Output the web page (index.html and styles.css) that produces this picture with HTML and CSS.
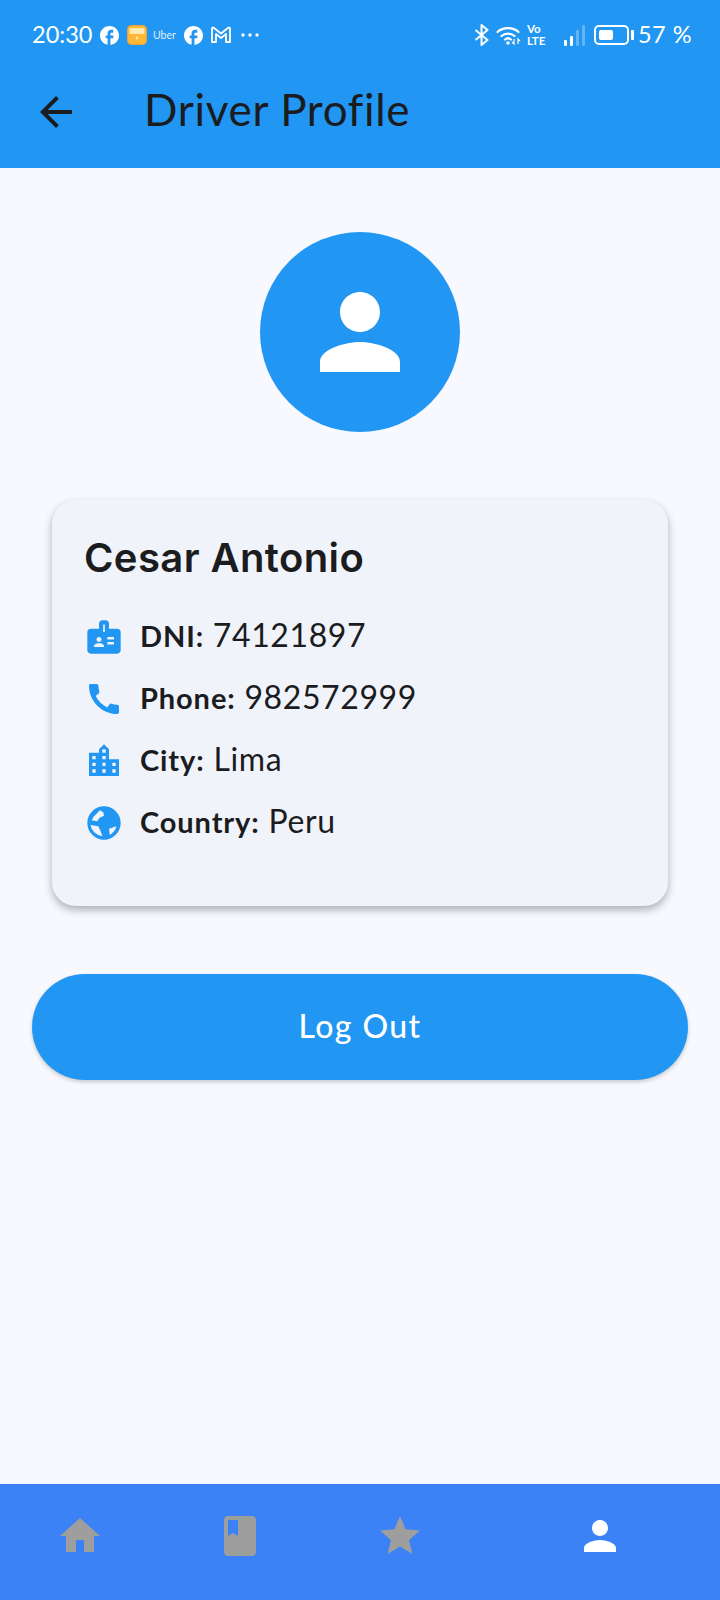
FILE: index.html
```html
<!DOCTYPE html>
<html lang="en">
<head>
  <meta charset="UTF-8">
  <title>Driver Profile</title>
  <link rel="stylesheet" href="styles.css">
</head>
<body>
  <div class="phone">
    <header class="appbar">
      <div class="status">
        <div class="status-left">
          <span class="clock">20:30</span>
          <svg class="ic-fb" viewBox="2 2 20 20"><path d="M22 12c0-5.52-4.48-10-10-10S2 6.48 2 12c0 4.84 3.44 8.87 8 9.8V15H8v-3h2V9.5C10 7.57 11.57 6 13.5 6H16v3h-2c-.55 0-1 .45-1 1v2h3v3h-3v6.95c5.05-.5 9-4.76 9-9.95z"/></svg>
          <svg class="ic-wallet" viewBox="0 0 20 20">
            <rect x=".5" y=".5" width="19" height="19" rx="4" fill="#fdb733" stroke="#eda33a"/>
            <rect x="2.5" y="3" width="15" height="6" rx="1" fill="#ffe9b0"/>
            <circle cx="10" cy="13" r="1.4" fill="#ffe9b0"/>
          </svg>
          <span class="uber">Uber</span>
          <svg class="ic-fb" viewBox="2 2 20 20"><path d="M22 12c0-5.52-4.48-10-10-10S2 6.48 2 12c0 4.84 3.44 8.87 8 9.8V15H8v-3h2V9.5C10 7.57 11.57 6 13.5 6H16v3h-2c-.55 0-1 .45-1 1v2h3v3h-3v6.95c5.05-.5 9-4.76 9-9.95z"/></svg>
          <svg class="ic-mail" viewBox="0 0 20 18"><path d="M1 16V2.5c0-1 1-1.300 1.700-.8L10 7.500l7.300-5.800c.7-.5 1.700-.2 1.700.8V16h-4V8l-5 4-5-4v8z" fill="none" stroke="#fff" stroke-width="1.800" stroke-linejoin="round"/></svg>
          <svg class="ic-dots" viewBox="0 0 18 4"><circle cx="2" cy="2" r="1.700"/><circle cx="9" cy="2" r="1.700"/><circle cx="16" cy="2" r="1.700"/></svg>
        </div>
        <div class="status-right">
          <svg class="ic-bt" viewBox="0 0 15 22"><path d="M1.500 6l12 10-6 5V1l6 5-12 10" fill="none" stroke="#fff" stroke-width="2" stroke-linejoin="round"/></svg>
          <svg class="ic-wifi" viewBox="0 0 26 20">
            <g fill="none" stroke="#fff" stroke-width="2.200" stroke-linecap="round">
              <path d="M1.500 7C7 1.800 17 1.800 22.500 7"/>
              <path d="M5.500 11c3.500-3.200 9.500-3.200 13 0"/>
              <path d="M9 14.500c1.800-1.500 4.200-1.500 6 0"/>
            </g>
            <circle cx="12" cy="18" r="1.800" fill="#fff"/>
            <path d="M18 14v5l-2-2M22 19v-5l2 2" fill="none" stroke="#fff" stroke-width="1.200"/>
          </svg>
          <span class="volte">Vo<br>LTE</span>
          <svg class="ic-signal" viewBox="0 0 22 21">
            <rect x="0" y="15" width="3" height="6" rx="1" fill="#fff"/>
            <rect x="6" y="11" width="3" height="10" rx="1" fill="#fff"/>
            <rect x="12" y="5" width="3" height="16" rx="1" fill="#fff" opacity=".3"/>
            <rect x="18" y="0" width="3" height="21" rx="1" fill="#fff" opacity=".3"/>
          </svg>
          <div class="battery"><div class="battery-level"></div></div>
          <div class="battery-nub"></div>
          <span class="percent">57 %</span>
        </div>
      </div>
      <div class="toolbar">
        <svg class="back" viewBox="0 0 24 24"><path d="M20 11H7.830l5.590-5.590L12 4l-8 8 8 8 1.410-1.410L7.830 13H20v-2z"/></svg>
        <h1 class="title">Driver Profile</h1>
      </div>
    </header>

    <main class="content">
      <div class="avatar">
        <svg viewBox="0 0 24 24"><path d="M12 12c2.210 0 4-1.790 4-4s-1.790-4-4-4-4 1.790-4 4 1.790 4 4 4zm0 2c-2.670 0-8 1.340-8 4v2h16v-2c0-2.660-5.330-4-8-4z"/></svg>
      </div>

      <section class="card">
        <h2 class="name">Cesar Antonio</h2>
        <div class="row">
          <svg viewBox="0 0 24 24"><path d="M20 7h-5V4c0-1.100-.9-2-2-2h-2c-1.100 0-2 .9-2 2v3H4c-1.100 0-2 .9-2 2v11c0 1.100.9 2 2 2h16c1.100 0 2-.9 2-2V9c0-1.100-.9-2-2-2zM9 12c.83 0 1.500.67 1.500 1.500S9.830 15 9 15s-1.500-.67-1.500-1.500S8.170 12 9 12zm3 6H6v-.75c0-1 2-1.500 3-1.500s3 .5 3 1.500V18zM12.500 9h-1V4.500h1V9zM18 16.500h-4V15h4v1.500zm0-3h-4V12h4v1.500z"/></svg>
          <p><strong>DNI:</strong> 74121897</p>
        </div>
        <div class="row">
          <svg viewBox="0 0 24 24"><path d="M20.010 15.380c-1.230 0-2.420-.2-3.530-.56-.35-.12-.74-.03-1.010.24l-1.570 1.970c-2.830-1.350-5.480-3.900-6.890-6.830l1.950-1.660c.27-.28.35-.67.24-1.020-.37-1.110-.56-2.300-.56-3.530 0-.54-.45-.99-.99-.99H4.190C3.650 3 3 3.240 3 3.990 3 13.280 10.730 21 20.010 21c.71 0 .99-.63.99-1.180v-3.450c0-.54-.45-.99-.99-.99z"/></svg>
          <p><strong>Phone:</strong> 982572999</p>
        </div>
        <div class="row">
          <svg viewBox="0 0 24 24"><path d="M15 11V5l-3-3-3 3v2H3v14h18V11h-6zm-8 8H5v-2h2v2zm0-4H5v-2h2v2zm0-4H5V9h2v2zm6 8h-2v-2h2v2zm0-4h-2v-2h2v2zm0-4h-2V9h2v2zm0-4h-2V5h2v2zm6 12h-2v-2h2v2zm0-4h-2v-2h2v2z"/></svg>
          <p><strong>City:</strong> Lima</p>
        </div>
        <div class="row">
          <svg viewBox="0 0 24 24"><path fill-rule="evenodd" d="M12 2a10 10 0 1 0 0 20 10 10 0 0 0 0-20zM6 8l3.600-3.600 2 1.200.4 2-2.800 1.400L8 11l-3.400-.6zM3.900 13.200l4.700.8 1.400 3 1 2.900A8 8 0 0 1 3.900 13.200zM15 15.500l4.400-1.500a8 8 0 0 1-3.900 5.200z"/></svg>
          <p><strong>Country:</strong> Peru</p>
        </div>
      </section>

      <button class="logout">Log Out</button>
    </main>

    <nav class="bottom-nav">
      <svg viewBox="0 0 24 24"><path d="M10 20v-6h4v6h5v-8h3L12 3 2 12h3v8z"/></svg>
      <svg viewBox="0 0 24 24"><path d="M18 2H6c-1.100 0-2 .9-2 2v16c0 1.100.9 2 2 2h12c1.100 0 2-.9 2-2V4c0-1.100-.9-2-2-2zM6 4h5v8l-2.500-1.500L6 12V4z"/></svg>
      <svg viewBox="0 0 24 24"><path d="M12 17.270L18.180 21l-1.640-7.030L22 9.240l-7.190-.61L12 2 9.190 8.630 2 9.240l5.460 4.730L5.820 21z"/></svg>
      <svg class="active" viewBox="0 0 24 24"><path d="M12 12c2.210 0 4-1.790 4-4s-1.790-4-4-4-4 1.790-4 4 1.790 4 4 4zm0 2c-2.670 0-8 1.340-8 4v2h16v-2c0-2.660-5.330-4-8-4z"/></svg>
    </nav>
  </div>
</body>
</html>
```

FILE: styles.css
```css
:root {
  --primary: #2196f3;
  --nav: #3b82f6;
  --bg: #f8f9ff;
  --card: #f1f3fb;
  --text: #1a1c20;
}

* {
  box-sizing: border-box;
}

body {
  margin: 0;
  background-color: var(--bg);
  color: var(--text);
  font-family: Lato, sans-serif;
}

.phone {
  display: flex;
  flex-direction: column;
  height: 1600px;
}

/* app bar + status bar */
.appbar {
  height: 168px;
  background-color: var(--primary);
}

.status {
  display: flex;
  justify-content: space-between;
  align-items: center;
  height: 70px;
  padding: 0 28px 0 32px;
  color: #fff;
}

.status-left,
.status-right {
  display: flex;
  align-items: center;
}

.status svg {
  fill: #fff;
  flex: none;
}

.clock {
  width: 68px;
  padding-bottom: 3px;
  font-size: 23.5px;
}

.ic-fb {
  width: 19px;
  height: 19px;
}

.ic-wallet {
  width: 20px;
  height: 20px;
  margin-left: 8px;
}

.uber {
  width: 24px;
  margin: 0 7px 0 6px;
  font-size: 10.5px;
  opacity: 0.85;
}

.ic-mail {
  width: 20px;
  height: 18px;
  margin-left: 8px;
}

.ic-dots {
  width: 18px;
  height: 4px;
  margin-left: 10px;
}

.ic-bt {
  width: 15px;
  height: 22px;
}

.ic-wifi {
  width: 26px;
  height: 20px;
  margin-left: 7px;
}

.volte {
  width: 20px;
  margin-left: 5px;
  font-size: 11.5px;
  font-weight: 700;
  line-height: 12px;
}

.ic-signal {
  width: 22px;
  height: 21px;
  margin-left: 17px;
}

.battery {
  width: 35px;
  height: 20px;
  margin-left: 8px;
  padding: 3px;
  border: 2px solid #fff;
  border-radius: 5px;
}

.battery-level {
  width: 57%;
  height: 100%;
  background-color: #fff;
  border-radius: 2px;
}

.battery-nub {
  width: 3px;
  height: 10px;
  margin-left: 2px;
  background-color: #fff;
  border-radius: 1px;
}

.percent {
  margin-left: 4px;
  padding-bottom: 2px;
  font-size: 23.5px;
  letter-spacing: 0.5px;
}

.toolbar {
  display: flex;
  align-items: center;
  height: 84px;
  padding-left: 32px;
}

.back {
  width: 48px;
  height: 48px;
  fill: var(--text);
}

.title {
  margin: 0 0 6px 64px;
  font-size: 44px;
  font-weight: 400;
  letter-spacing: 0.7px;
}

/* page body */
.content {
  flex: 1;
  display: flex;
  flex-direction: column;
  align-items: center;
  padding-top: 64px;
}

.avatar {
  display: flex;
  align-items: center;
  justify-content: center;
  width: 200px;
  height: 200px;
  background-color: var(--primary);
  border-radius: 50%;
}

.avatar svg {
  width: 120px;
  height: 120px;
  fill: #fff;
}

.card {
  width: 616px;
  height: 406px;
  margin-top: 68px;
  padding: 32px;
  background-color: var(--card);
  border-radius: 24px;
  box-shadow: 0 4px 8px rgba(0, 0, 0, 0.3);
}

.name {
  margin: 0 0 22px;
  font-family: Inter, sans-serif;
  font-size: 40px;
  font-weight: 600;
  letter-spacing: 0.4px;
  line-height: 52px;
}

.row {
  display: flex;
  align-items: center;
  gap: 16px;
  height: 62px;
}

.row svg {
  width: 40px;
  height: 40px;
  fill: var(--primary);
  flex: none;
}

.row p {
  margin: 0;
  padding-bottom: 6px;
  font-size: 32px;
  font-weight: 400;
  letter-spacing: 0.6px;
}

.row strong {
  font-size: 29px;
  font-weight: 700;
  letter-spacing: 0.9px;
}

.logout {
  width: 656px;
  height: 106px;
  margin-top: 68px;
  padding-bottom: 4px;
  background-color: var(--primary);
  color: #fff;
  border: none;
  border-radius: 53px;
  box-shadow: 0 2px 4px rgba(0, 0, 0, 0.2);
  font-family: Lato, sans-serif;
  font-size: 32px;
  font-weight: 500;
  letter-spacing: 1.4px;
}

.bottom-nav {
  display: flex;
  gap: 112px;
  height: 116px;
  padding: 28px 0 0 56px;
  background-color: var(--nav);
}

.bottom-nav svg {
  width: 48px;
  height: 48px;
  fill: #9e9e9e;
}

.bottom-nav .active {
  margin-left: 40px;
  fill: #fff;
}
```
